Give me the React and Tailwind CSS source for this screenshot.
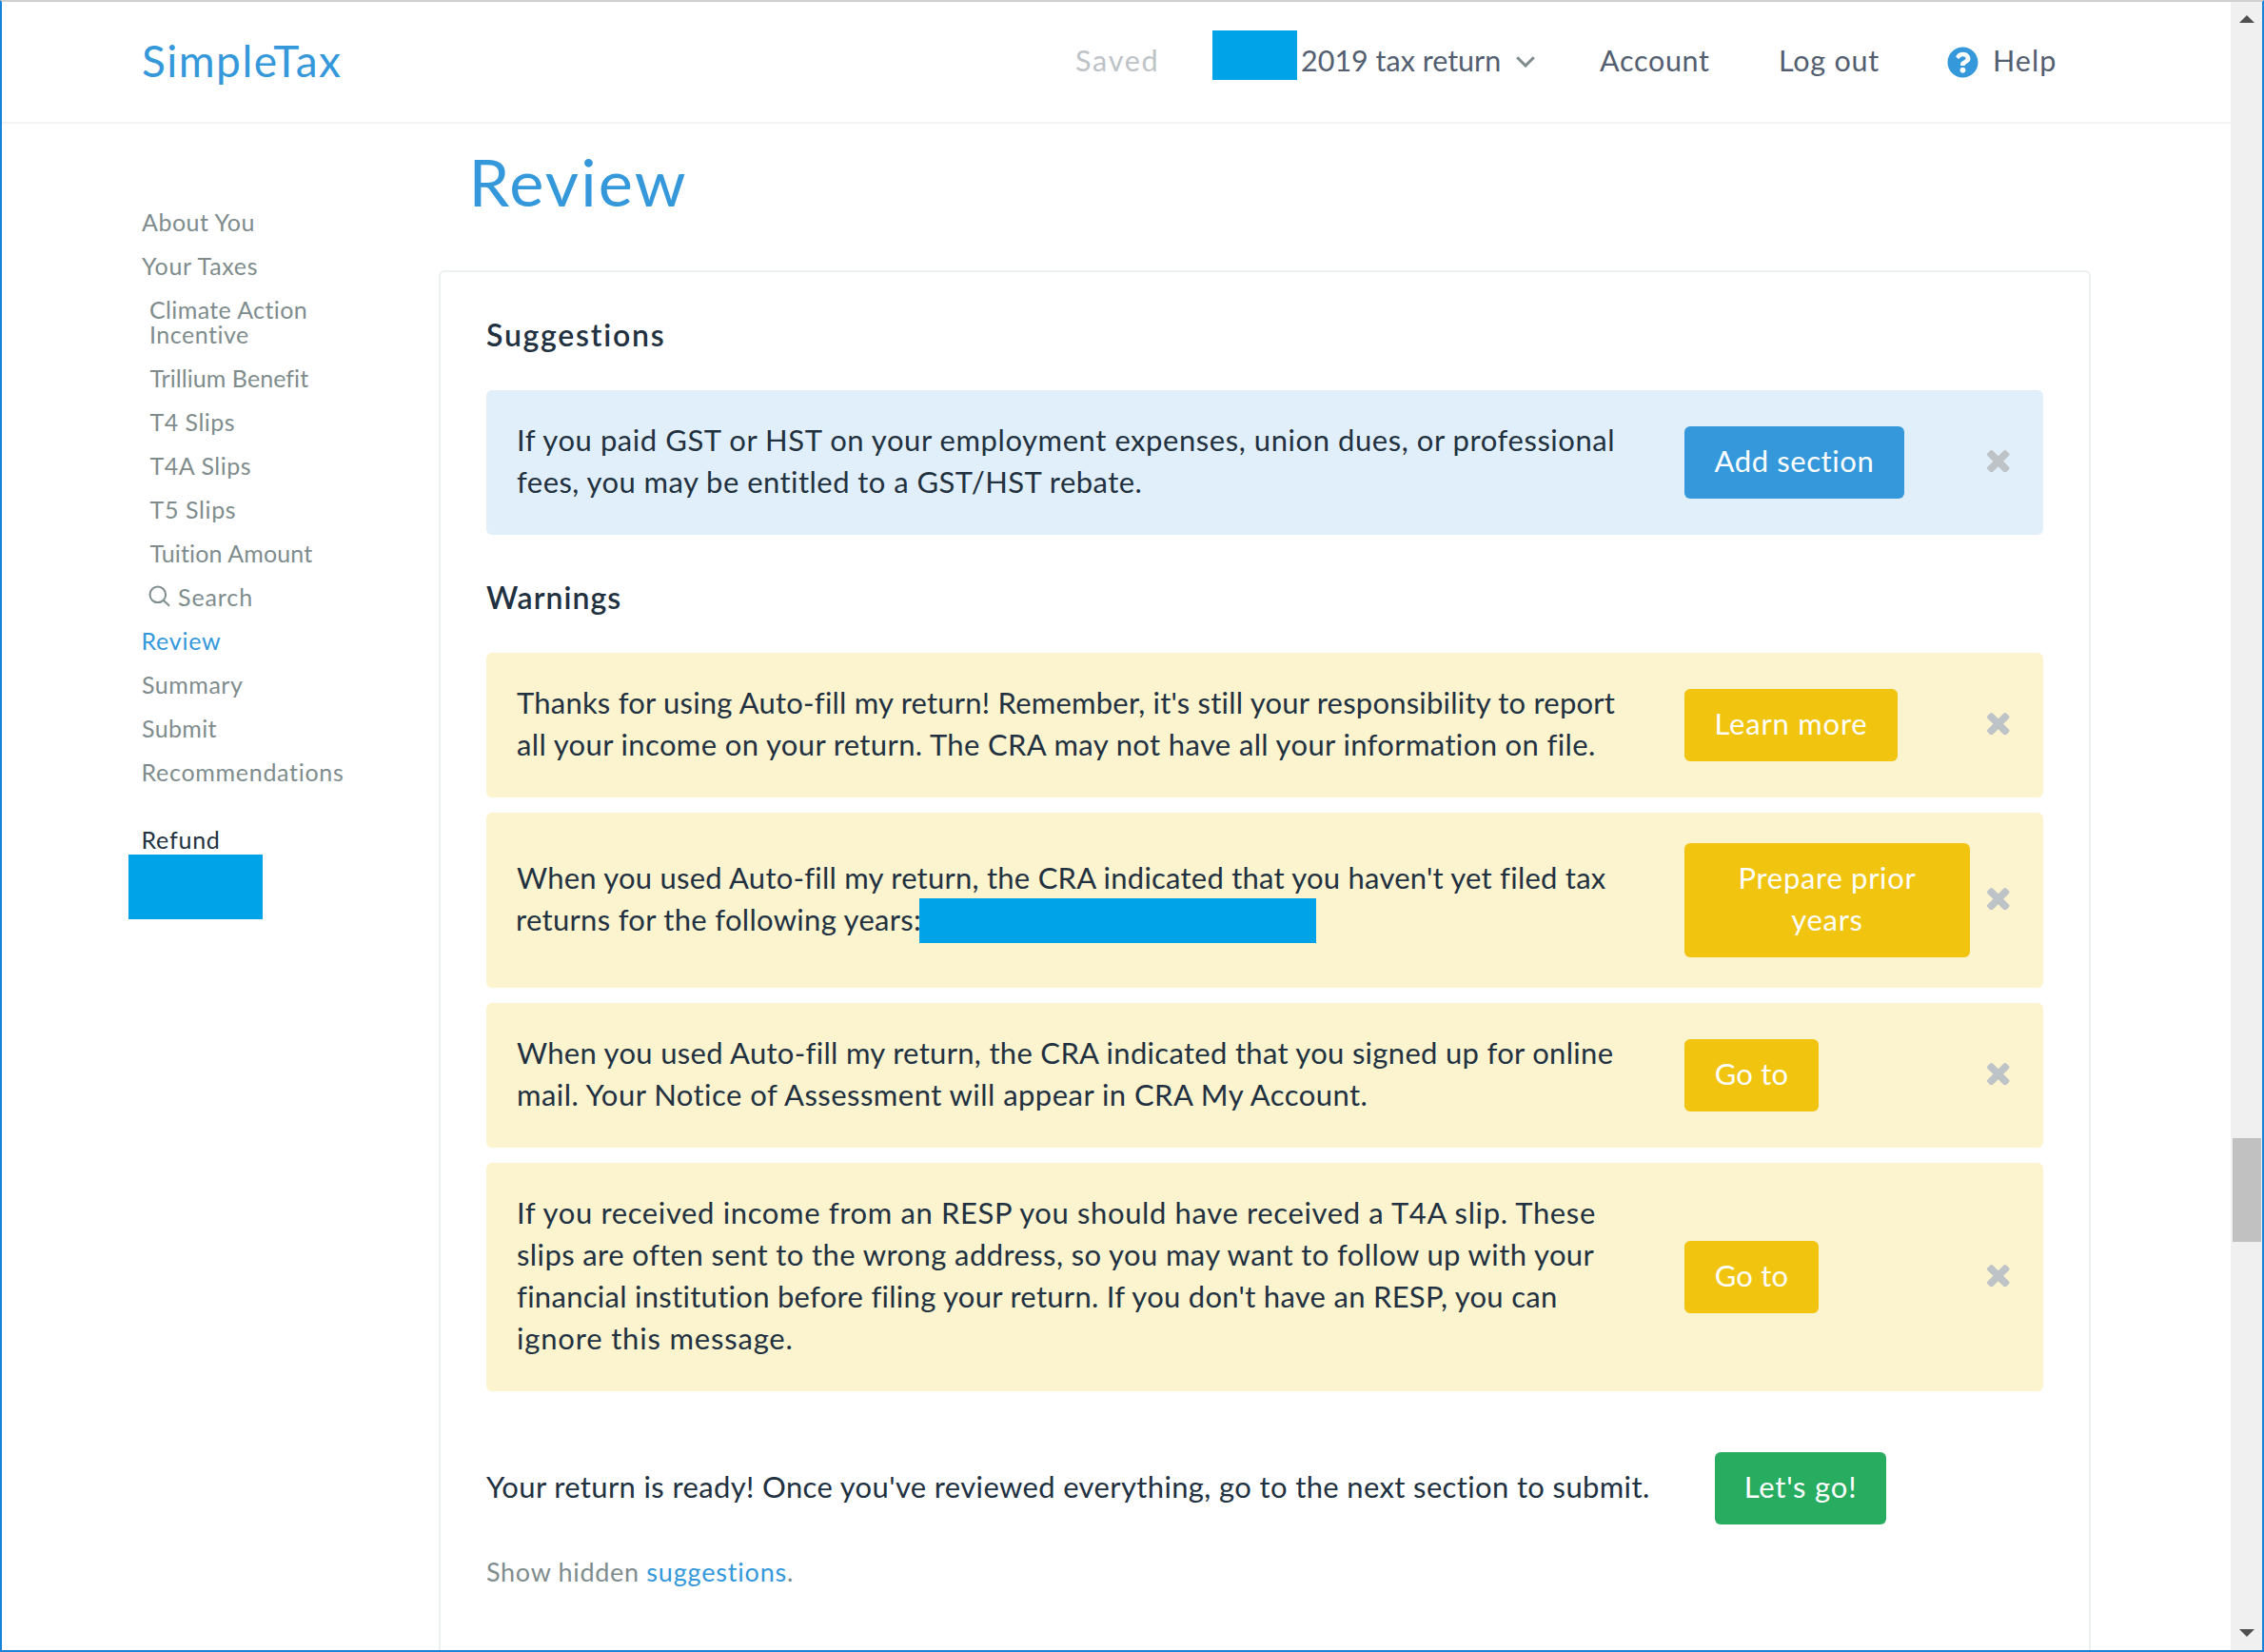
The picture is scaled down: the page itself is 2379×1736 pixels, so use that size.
import React from "react";
import { FaQuestionCircle } from "react-icons/fa";

const sections = [
  { label: "About You", className: "tracking-[0.5px]" },
  { label: "Your Taxes", className: "tracking-[0.68px]" },
  { label: "Climate Action", second: "Incentive", className: "ml-[8px] tracking-[0.38px]" },
  { label: "Trillium Benefit", className: "ml-[8.5px] tracking-[0.06px]" },
  { label: "T4 Slips", className: "ml-[8.5px] tracking-[0.48px]" },
  { label: "T4A Slips", className: "ml-[8.5px] tracking-[0.54px]" },
  { label: "T5 Slips", className: "ml-[8.5px] tracking-[0.62px]" },
  { label: "Tuition Amount", className: "ml-[8.5px] tracking-[0.13px]" },
  { label: "Search", search: true, className: "ml-[7.5px] tracking-[0.9px]" },
  { label: "Review", className: "-ml-[0.5px] tracking-[0.76px] text-[#3498db]" },
  { label: "Summary", className: "tracking-[0.5px]" },
  { label: "Submit", className: "tracking-[0.36px]" },
  { label: "Recommendations", className: "-ml-[0.5px] tracking-[0.71px]" },
];

const warnings = [
  {
    lines: [
      { text: "Thanks for using Auto-fill my return! Remember, it's still your responsibility to report", className: "tracking-[0.214px]" },
      { text: "all your income on your return. The CRA may not have all your information on file.", className: "tracking-[0.37px]" },
    ],
    action: "Learn more",
    actionClass: "w-[224px] tracking-[0.78px]",
  },
  {
    lines: [
      { text: "When you used Auto-fill my return, the CRA indicated that you haven't yet filed tax", className: "tracking-[0.235px]" },
      { text: "returns for the following years:", redacted: true, className: "-ml-px tracking-[0.3px]" },
    ],
    action: "Prepare prior years",
    actionClass: "w-[300px] px-[48px] tracking-[0.69px]",
  },
  {
    lines: [
      { text: "When you used Auto-fill my return, the CRA indicated that you signed up for online", className: "tracking-[0.305px]" },
      { text: "mail. Your Notice of Assessment will appear in CRA My Account.", className: "tracking-[0.46px]" },
    ],
    action: "Go to",
    actionClass: "w-[141px] tracking-[0.2px]",
  },
  {
    lines: [
      { text: "If you received income from an RESP you should have received a T4A slip. These", className: "tracking-[0.63px]" },
      { text: "slips are often sent to the wrong address, so you may want to follow up with your", className: "tracking-[0.4px]" },
      { text: "financial institution before filing your return. If you don't have an RESP, you can", className: "tracking-[0.284px]" },
      { text: "ignore this message.", className: "tracking-[0.82px]" },
    ],
    action: "Go to",
    actionClass: "w-[141px] tracking-[0.2px]",
  },
];

const suggestion = {
  lines: [
    { text: "If you paid GST or HST on your employment expenses, union dues, or professional", className: "tracking-[0.56px]" },
    { text: "fees, you may be entitled to a GST/HST rebate.", className: "tracking-[0.455px]" },
  ],
  action: "Add section",
  actionClass: "w-[231px] tracking-[0.59px]",
};

function CloseIcon() {
  return (
    <svg viewBox="110 366 1188 1188" className="mb-[3px] ml-[18px] size-[23.5px] shrink-0 fill-[#bdc3c7]">
      <path d="M1298 1322q0 40-28 68l-136 136q-28 28-68 28t-68-28l-294-294-294 294q-28 28-68 28t-68-28l-136-136q-28-28-28-68t28-68l294-294-294-294q-28-28-28-68t28-68l136-136q28-28 68-28t68 28l294 294 294-294q28-28 68-28t68 28l136 136q28 28 28 68t-28 68l-294 294 294 294q28 28 28 68z" />
    </svg>
  );
}

function SearchIcon() {
  return (
    <svg viewBox="0 0 23 23" className="mt-px mr-[8px] -ml-[0.5px] size-[23px] fill-none stroke-current stroke-2">
      <circle cx="9.8" cy="9.8" r="8.3" />
      <path d="M15.7 15.7 L22 21.8" />
    </svg>
  );
}

function Notice({ item, tone, buttonTone }) {
  return (
    <div className={`flex items-center rounded-[6px] py-[30px] pl-8 ${tone}`}>
      <div className="w-[1227px] shrink-0 pb-1 leading-[44px]">
        {item.lines.map((line) => (
          <div key={line.text} className="flex h-[44px] whitespace-nowrap">
            <span className={`${line.redacted ? "w-[424px]" : ""} ${line.className}`}>{line.text}</span>
            {line.redacted && <span className="h-[47px] w-[417px] shrink-0 bg-[#00a2e8]" />}
          </div>
        ))}
      </div>
      <div className="w-[300px] shrink-0">
        <button className={`my-0.5 block rounded-[6px] pt-[14px] pb-[18px] text-center leading-[44px] text-white ${buttonTone} ${item.actionClass}`}>
          {item.action}
        </button>
      </div>
      <CloseIcon />
    </div>
  );
}

function Header() {
  return (
    <header className="flex h-[128px] shrink-0 items-center border-b-2 border-[#f3f3f3] pb-[2px] pl-[147px] text-[30.5px] whitespace-nowrap text-[#535e70]">
      <div className="w-[981px] shrink-0 pb-[2px] text-[46px] tracking-[1.5px] text-[#3498db]">SimpleTax</div>
      <span className="w-[144px] shrink-0 tracking-[1.75px] text-[#bdc3c7]">Saved</span>
      <span className="mb-[12px] h-[52px] w-[89px] shrink-0 bg-[#00a2e8]" />
      <span className="ml-1 w-[226px] shrink-0">2019 tax return</span>
      <svg viewBox="0 0 20 12" className="mt-[2px] h-3 w-5 shrink-0 fill-none stroke-[#7f8c8d] stroke-3">
        <path d="M1.2 1.2 L10 10 L18.8 1.2" />
      </svg>
      <span className="ml-[68px] w-[188px] shrink-0 tracking-[0.7px]">Account</span>
      <span className="w-[177px] shrink-0 tracking-[0.77px]">Log out</span>
      <FaQuestionCircle className="mt-[2px] size-[33px] shrink-0 text-[#3498db]" />
      <span className="ml-[15px] tracking-[1.05px]">Help</span>
    </header>
  );
}

function Sidebar() {
  return (
    <nav className="w-[459px] shrink-0 pt-[90px] pl-[147px] text-[25px] leading-[26px] whitespace-nowrap text-[#7f8c8d]">
      <ul className="flex flex-col gap-5">
        {sections.map((s) => (
          <li key={s.label} className={`flex ${s.className}`}>
            {s.search && <SearchIcon />}
            <span>
              {s.label}
              {s.second && <span className="block tracking-[0.5px]">{s.second}</span>}
            </span>
          </li>
        ))}
      </ul>
      <div className="mt-[45px] -ml-[0.5px] tracking-[0.75px] text-[#22313f]">Refund</div>
      <div className="mt-[3px] -ml-[14px] h-[68px] w-[141px] bg-[#00a2e8]" />
    </nav>
  );
}

function Scrollbar() {
  return (
    <div className="flex w-[33px] shrink-0 flex-col items-center bg-[#f0f0f0]">
      <svg viewBox="0 0 16 8" className="mt-[14px] h-2 w-4 fill-[#505050]">
        <path d="M8 0 L16 8 H0 Z" />
      </svg>
      <div className="mt-[1172px] h-[109px] w-[30px] bg-[#c1c1c1]" />
      <svg viewBox="0 0 16 8" className="mt-auto mb-[14px] h-2 w-4 fill-[#505050]">
        <path d="M0 0 H16 L8 8 Z" />
      </svg>
    </div>
  );
}

export default function App() {
  return (
    <div className="flex h-[1736px] w-[2379px] overflow-hidden border-2 border-[#1883d7] border-t-[#d0d0d0] bg-white font-['Lato',sans-serif] text-[31px] text-[#22313f]">
      <div className="flex flex-1 flex-col">
        <Header />
        <div className="flex flex-1">
          <Sidebar />
          <main className="flex w-[1736px] shrink-0 flex-col pt-[21px]">
            <h1 className="mb-[53px] pl-[31.5px] text-[68.5px] leading-[80px] tracking-[2.1px] text-[#3498db]">Review</h1>
            <section className="flex-1 rounded-t-[6px] border-2 border-b-0 border-[#ecf0f1] px-[48px] pt-[44px]">
              <h2 className="mb-[36px] text-[32px] leading-[44px] font-semibold tracking-[1.75px]">Suggestions</h2>
              <Notice item={suggestion} tone="bg-[#e1effa]" buttonTone="bg-[#3498db]" />
              <h2 className="mt-[44px] mb-[36px] text-[32px] leading-[44px] font-semibold tracking-[1.05px]">Warnings</h2>
              <div className="flex flex-col gap-4">
                {warnings.map((w, i) => (
                  <Notice key={i} item={w} tone="bg-[#fcf3cf]" buttonTone="bg-[#f1c40f]" />
                ))}
              </div>
              <div className="mt-16 flex items-center whitespace-nowrap">
                <p className="w-[1291px] shrink-0 pb-1 leading-[44px] tracking-[0.363px]">
                  Your return is ready! Once you've reviewed everything, go to the next section to submit.
                </p>
                <button className="w-[180px] rounded-[6px] bg-[#28ac5f] pt-[14px] pb-[18px] leading-[44px] tracking-[0.8px] text-white">
                  Let's go!
                </button>
              </div>
              <p className="mt-[30px] text-[27px] leading-[40px] tracking-[0.68px] text-[#7f8c8d]">
                Show hidden <a className="tracking-[0.82px] text-[#3498db]">suggestions</a>.
              </p>
            </section>
          </main>
        </div>
      </div>
      <Scrollbar />
    </div>
  );
}
